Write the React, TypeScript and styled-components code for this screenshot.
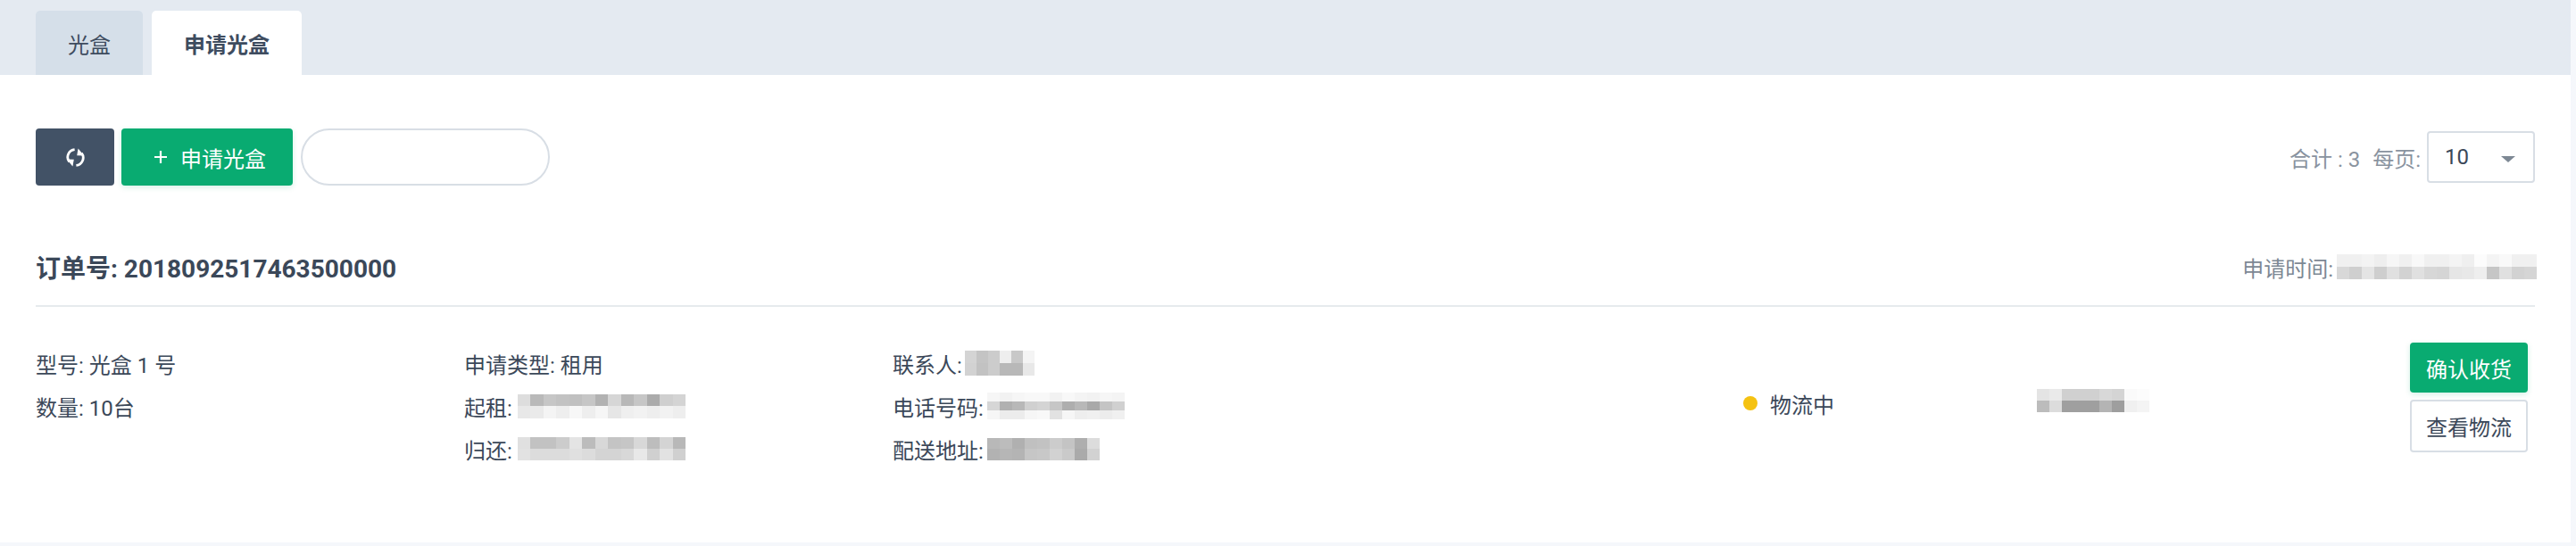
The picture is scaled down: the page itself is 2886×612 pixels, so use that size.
import React from 'react';
import styled, { createGlobalStyle } from 'styled-components';

const GlobalStyle = createGlobalStyle`
  html, body {
    margin: 0;
    padding: 0;
    background: #f5f7fb;
    font-family: Roboto, "Noto Sans CJK SC", sans-serif;
    color: #3b4859;
  }
  * {
    box-sizing: border-box;
  }
`;

interface MosaicProps {
  rows: string[][];
  cellW?: number;
  cellH?: number;
  gap?: number;
}

// blurred out personal data, drawn as blocks of grey
const Mosaic: React.FC<MosaicProps> = ({ rows, cellW = 14, cellH = 14, gap = 6 }) => (
  <MosaicGrid $cols={rows[0].length} $w={cellW} $h={cellH} $gap={gap}>
    {rows.flat().map((v, i) => (
      <MosaicCell key={i} $v={v} />
    ))}
  </MosaicGrid>
);

const g = (s: string) => s.split(' ');

const App: React.FC = () => {
  return (
    <Page>
      <GlobalStyle />
      <Panel>
        <TabBar>
          <Tab>光盒</Tab>
          <Tab $active>申请光盒</Tab>
        </TabBar>
        <Toolbar>
          <RefreshButton aria-label="refresh">
            <svg width="21" height="21" viewBox="0 0 21 21" fill="none">
              <path d="M9.6 1.6A8.6 8.6 0 0 0 3.6 15.4" stroke="#fff" strokeWidth="2.8" />
              <path d="M0.8 12.6l8 .2-1.4 7.6z" fill="#fff" />
              <path d="M11.4 19.4A8.6 8.6 0 0 0 17.4 5.6" stroke="#fff" strokeWidth="2.8" />
              <path d="M20.2 8.4l-8-.2 1.4-7.6z" fill="#fff" />
            </svg>
          </RefreshButton>
          <PrimaryButton>
            <PlusIcon width="14" height="14" viewBox="0 0 14 14">
              <path d="M7 0v14M0 7h14" stroke="#fff" strokeWidth="2.2" />
            </PlusIcon>
            申请光盒
          </PrimaryButton>
          <SearchInput />
          <PageInfo>
            <Muted>合计 : 3</Muted>
            <Muted>每页:</Muted>
            <PageSelect>
              10
              <Caret />
            </PageSelect>
          </PageInfo>
        </Toolbar>
        <Order>
          <OrderHead>
            <OrderNo>订单号: 2018092517463500000</OrderNo>
            <OrderTime>
              申请时间:
              <Mosaic
                gap={4}
                rows={[
                  g('f0 f0 f3 ee f6 f0 f8 f0 f0 f4 ef fc f4 f9 f0 f0'),
                  g('d8 cf e4 ce e0 d2 e0 d7 d5 e6 e8 ee c6 e0 d2 d5'),
                ]}
              />
            </OrderTime>
          </OrderHead>
          <OrderBody>
            <InfoColumn>
              <InfoRow>型号: 光盒 1 号</InfoRow>
              <InfoRow>数量: 10台</InfoRow>
            </InfoColumn>
            <InfoColumn>
              <InfoRow>申请类型: 租用</InfoRow>
              <InfoRow>
                起租:
                <Mosaic
                  cellW={14.5}
                  cellH={13.5}
                  rows={[
                    g('dd b9 c6 c2 c0 c6 b2 d6 b8 c6 ab cf d4'),
                    g('e8 ea f4 ee f7 ee f6 e6 ef f2 ee f2 ee'),
                  ]}
                />
              </InfoRow>
              <InfoRow>
                归还:
                <Mosaic
                  cellW={14.5}
                  cellH={13}
                  rows={[
                    g('e0 c2 c2 cc e4 bc d8 c4 c6 d8 bd d4 b8'),
                    g('e2 dc dc dc e0 dc d4 d4 d8 e8 d0 e2 d0'),
                  ]}
                />
              </InfoRow>
            </InfoColumn>
            <ContactColumn>
              <InfoRow>
                联系人:
                <Mosaic
                  gap={3}
                  cellW={13}
                  rows={[
                    g('d4 c4 cc ee c8 f4'),
                    g('d2 c2 cc b8 b8 e8'),
                  ]}
                />
              </InfoRow>
              <InfoRow>
                电话号码:
                <Mosaic
                  gap={4}
                  cellH={10}
                  rows={[
                    g('f6 f2 f6 f8 f8 f2 f8 f4 f2 f6 f4'),
                    g('d6 b0 b8 d0 d4 c6 ae b8 a9 c4 d0'),
                    g('f6 ec ec f6 f8 e2 f6 ee f0 ec f0'),
                  ]}
                />
              </InfoRow>
              <InfoRow>
                配送地址:
                <Mosaic
                  gap={4}
                  cellH={12.5}
                  rows={[
                    g('b8 bc b0 c0 c2 cc c4 ae dc'),
                    g('b2 b6 b4 c6 c8 d2 ca aa d2'),
                  ]}
                />
              </InfoRow>
            </ContactColumn>
            <StatusColumn>
              <StatusDot />
              物流中
            </StatusColumn>
            <RemarkColumn>
              <Mosaic
                gap={0}
                cellH={13}
                rows={[
                  g('e4 ea d0 d0 d0 d8 d4 fa fc'),
                  g('bc dc 9f 9f 9f b4 9e f0 f4'),
                ]}
              />
            </RemarkColumn>
            <Actions>
              <ConfirmButton>确认收货</ConfirmButton>
              <GhostButton>查看物流</GhostButton>
            </Actions>
          </OrderBody>
        </Order>
      </Panel>
    </Page>
  );
};
export default App;

const Page = styled.div`
  width: 2886px;
  height: 612px;
  overflow: hidden;
`;
const Panel = styled.main`
  width: 2880px;
  height: 608px;
  background: #fff;
`;
const TabBar = styled.nav`
  height: 84px;
  padding: 12px 0 0 40px;
  display: flex;
  gap: 10px;
  background: #e4eaf1;
`;
const Tab = styled.div<{ $active?: boolean }>`
  height: 72px;
  padding: 0 36px;
  display: flex;
  align-items: center;
  font-size: 24px;
  border-radius: 5px 5px 0 0;
  color: #3e4c5f;
  font-weight: ${(p) => (p.$active ? 700 : 400)};
  background: ${(p) => (p.$active ? '#fff' : '#d5dfe9')};
`;
const Toolbar = styled.div`
  padding: 60px 40px 0;
  display: flex;
  align-items: center;
  height: 124px;
`;
const RefreshButton = styled.button`
  width: 88px;
  height: 64px;
  padding: 0;
  margin-right: 8px;
  border: none;
  border-radius: 4px;
  background: #425266;
  display: flex;
  align-items: center;
  justify-content: center;
`;
const PrimaryButton = styled.button`
  width: 192px;
  height: 64px;
  padding: 0 0 0 37px;
  margin-right: 9px;
  border: none;
  border-radius: 4px;
  background: #09ab71;
  color: #fff;
  font: 400 24px Roboto, "Noto Sans CJK SC", sans-serif;
  display: flex;
  align-items: center;
  box-shadow: 0 2px 6px rgba(9, 171, 113, 0.18);
`;
const PlusIcon = styled.svg`
  margin-right: 15px;
`;
const SearchInput = styled.input`
  width: 279px;
  height: 64px;
  border: 2px solid #d8dee5;
  border-radius: 32px;
  background: #fff;
  outline: none;
`;
const PageInfo = styled.div`
  margin-left: auto;
  display: flex;
  align-items: center;
  gap: 14px;
`;
const Muted = styled.span`
  font-size: 24px;
  color: #89939f;
  &:last-of-type {
    margin-right: -7px;
  }
`;
const PageSelect = styled.div`
  width: 121px;
  height: 58px;
  padding: 0 20px 0 18px;
  border: 2px solid #d8dee5;
  border-radius: 4px;
  display: flex;
  align-items: center;
  justify-content: space-between;
  font-size: 24px;
  color: #3b4859;
`;
const Caret = styled.span`
  width: 0;
  height: 0;
  margin-top: 4px;
  border-left: 8px solid transparent;
  border-right: 8px solid transparent;
  border-top: 7px solid #7d8894;
`;
const Order = styled.section`
  padding: 0 40px;
`;
const OrderHead = styled.header`
  height: 76px;
  margin-top: 60px;
  padding-bottom: 12px;
  display: flex;
  align-items: center;
  justify-content: space-between;
  border-bottom: 2px solid #e6eaed;
`;
const OrderNo = styled.h2`
  margin: 0;
  font-size: 28px;
  font-weight: 700;
  color: #3b4859;
`;
const OrderTime = styled.div`
  margin-right: -2px;
  display: flex;
  align-items: center;
  font-size: 24px;
  color: #7d8894;
`;
const OrderBody = styled.div`
  padding-top: 39px;
  display: flex;
  font-size: 24px;
`;
const InfoColumn = styled.div`
  width: 480px;
`;
const ContactColumn = styled.div`
  width: 953px;
`;
const InfoRow = styled.div`
  height: 48px;
  display: flex;
  align-items: center;
`;
const MosaicGrid = styled.div<{ $cols: number; $w: number; $h: number; $gap: number }>`
  display: grid;
  grid-template-columns: repeat(${(p) => p.$cols}, ${(p) => p.$w}px);
  grid-auto-rows: ${(p) => p.$h}px;
  margin-left: ${(p) => p.$gap}px;
`;
const MosaicCell = styled.div<{ $v: string }>`
  background: ${(p) => `#${p.$v}${p.$v}${p.$v}`};
`;
const StatusColumn = styled.div`
  width: 329px;
  height: 48px;
  margin-top: 45px;
  display: flex;
  align-items: center;
`;
const StatusDot = styled.span`
  width: 16px;
  height: 16px;
  margin-right: 14px;
  border-radius: 50%;
  background: #f5c211;
`;
const RemarkColumn = styled.div`
  margin-top: 53px;
`;
const Actions = styled.div`
  margin: 1px 8px 0 auto;
  display: flex;
  flex-direction: column;
  gap: 8px;
`;
const ConfirmButton = styled.button`
  width: 132px;
  height: 56px;
  padding: 0;
  border: none;
  border-radius: 4px;
  background: #09ab71;
  color: #fff;
  font: 400 24px Roboto, "Noto Sans CJK SC", sans-serif;
  box-shadow: 0 2px 6px rgba(9, 171, 113, 0.18);
`;
const GhostButton = styled.button`
  width: 132px;
  height: 59px;
  padding: 0;
  border: 2px solid #d8dee5;
  border-radius: 4px;
  background: #fff;
  color: #3b4859;
  font: 400 24px Roboto, "Noto Sans CJK SC", sans-serif;
`;
